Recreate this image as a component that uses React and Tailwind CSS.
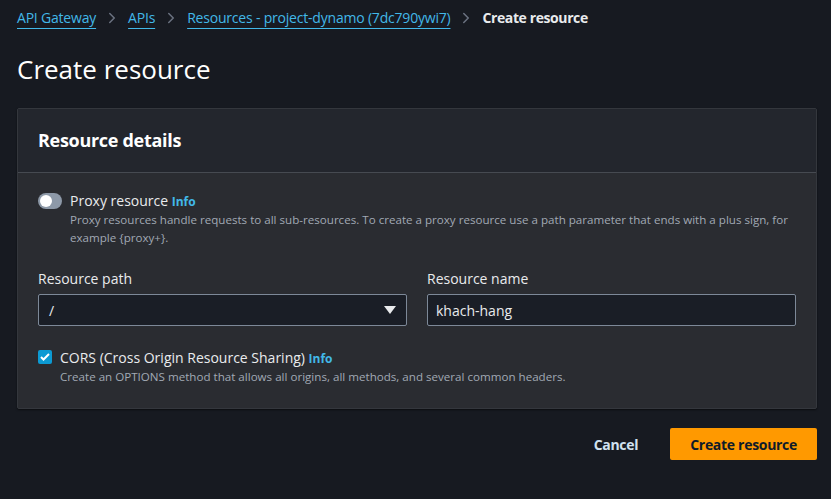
import { ChevronRight } from "lucide-react";

const font = { fontFamily: '"Open Sans", "Noto Sans", sans-serif' };

const PROXY_DESC =
  "Proxy resources handle requests to all sub-resources. To create a proxy resource use a path parameter that ends with a plus sign, for example {proxy+}.";

function Crumb({ children }) {
  return (
    <a className="text-[#42b8e8] underline decoration-1 underline-offset-[5px] cursor-pointer">
      {children}
    </a>
  );
}

function Sep() {
  return <ChevronRight size={18} strokeWidth={2} className="text-[#6b7280] mx-[7px]" />;
}

export default function App() {
  return (
    <div className="min-h-[499px] w-full bg-[#171a21] text-[#d1d5db] pl-[17px] pr-[14px] pt-[8px]" style={font}>
      <nav className="flex items-center text-[14px] leading-[20px] h-[20px] tracking-[-0.2px]">
        <Crumb>API Gateway</Crumb>
        <Sep />
        <Crumb>APIs</Crumb>
        <Sep />
        <Crumb>Resources - project-dynamo (7dc790ywi7)</Crumb>
        <Sep />
        <span className="font-bold text-[#e9ebed] tracking-[-0.4px]">Create resource</span>
      </nav>

      <h1 className="mt-[24px] text-[26px] leading-[34px] text-white">Create resource</h1>

      <section className="mt-[22px] bg-[#2a2c31] border border-[#34373d] rounded-[2px] shadow-[0_1px_2px_rgba(0,0,0,0.5)]">
        <header className="bg-[#23262d] border-b border-[#464a51] px-[20px] h-[64px] flex items-center">
          <h2 className="text-[18px] font-bold text-white tracking-[-0.3px]">Resource details</h2>
        </header>

        <div className="px-[20px] pt-[19px] pb-[22px]">
          <div className="flex gap-[8px]">
            <div className="mt-[1px] w-[24px] h-[16px] rounded-full bg-[#8d99a8] relative shrink-0">
              <div className="absolute left-[2px] top-[2px] w-[12px] h-[12px] rounded-full bg-white" />
            </div>
            <div>
              <div className="text-[14px] leading-[18px] text-[#e9ebed]">
                Proxy resource <span className="text-[#42b8e8] font-bold text-[12px]">Info</span>
              </div>
              <p className="text-[11.6px] leading-[18px] text-[#a1a9b4]">{PROXY_DESC}</p>
            </div>
          </div>

          <div className="grid grid-cols-2 gap-[20px] mt-[22px]">
            <div>
              <label className="block text-[14px] leading-[20px] text-[#e9ebed]">Resource path</label>
              <div className="mt-[5px] h-[32px] border border-[#7d8998] rounded-[2px] bg-[#1a1e26] flex items-center justify-between px-[10px]">
                <span className="text-[14px] text-[#e9ebed]">/</span>
                <svg width="12" height="8" viewBox="0 0 12 8"><path d="M0 0h12L6 8z" fill="#e9ebed" /></svg>
              </div>
            </div>
            <div>
              <label className="block text-[14px] leading-[20px] text-[#e9ebed]">Resource name</label>
              <div className="mt-[5px] h-[32px] border border-[#7d8998] rounded-[2px] bg-[#1a1e26] flex items-center px-[8px]">
                <span className="text-[14px] text-[#e9ebed]">khach-hang</span>
              </div>
            </div>
          </div>

          <div className="flex gap-[8px] mt-[23px]">
            <div className="mt-[1px] w-[14px] h-[14px] rounded-[2px] bg-[#0c9ad3] flex items-center justify-center shrink-0">
              <svg width="10" height="8" viewBox="0 0 10 8"><path d="M1 4l2.5 2.5L9 1" stroke="white" strokeWidth="2" fill="none" /></svg>
            </div>
            <div>
              <div className="text-[14px] leading-[18px] text-[#e9ebed]">
                CORS (Cross Origin Resource Sharing) <span className="text-[#42b8e8] font-bold text-[12px]">Info</span>
              </div>
              <p className="text-[11.6px] leading-[18px] text-[#a1a9b4]">
                Create an OPTIONS method that allows all origins, all methods, and several common headers.
              </p>
            </div>
          </div>
        </div>
      </section>

      <div className="flex justify-end items-center gap-[32px] mt-[19px]">
        <button className="text-[14px] font-bold text-[#d1e1ef] tracking-[-0.3px]">Cancel</button>
        <button className="h-[32px] px-[20px] bg-[#ff9900] rounded-[2px] text-[14px] font-bold text-[#0f1b2a] tracking-[-0.3px]">Create resource</button>
      </div>
    </div>
  );
}
